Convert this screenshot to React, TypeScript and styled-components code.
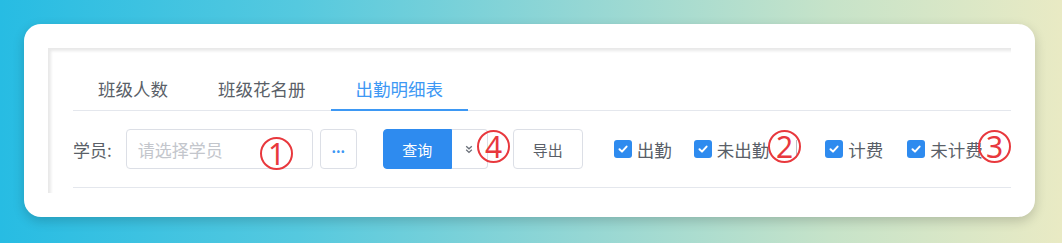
import React from 'react'
import styled, { createGlobalStyle } from 'styled-components'

const GlobalStyle = createGlobalStyle`
    html, body {
        margin: 0;
        height: 100%;
    }
    body {
        padding: 24px;
        box-sizing: border-box;
        background: linear-gradient(90deg, #27bce3 0%, #55c9df 28%, #95d7d4 55%, #c6e3c9 78%, #e9eac4 100%);
        font-family: "Noto Sans CJK SC", "Noto Sans", sans-serif;
    }
`

const Card = styled.div`
    width: 1011px;
    height: 193px;
    box-sizing: border-box;
    padding: 24px;
    background: #fff;
    border-radius: 17px;
    box-shadow: 0 4px 12px rgba(0, 0, 0, 0.18);
`

const Viewport = styled.div`
    height: 145px;
    overflow: hidden;
`

const Panel = styled.div`
    height: 100%;
    box-sizing: border-box;
    padding: 22px 0 0 25px;
    box-shadow: inset 4px 4px 3px -1px rgba(0, 0, 0, 0.09);
`

const TabBar = styled.div`
    display: flex;
    height: 40px;
    border-bottom: 1px solid #e4e7ed;
`

const Tab = styled.div<{ $active?: boolean }>`
    padding: 0 25px;
    box-sizing: border-box;
    line-height: 38px;
    font-size: 17.5px;
    color: ${(p) => (p.$active ? '#3d98f4' : '#5a5f68')};
    border-bottom: 2px solid ${(p) => (p.$active ? '#3d98f4' : 'transparent')};
    margin-bottom: -1px;
    height: 41px;
`

const Toolbar = styled.div`
    position: relative;
    display: flex;
    align-items: center;
    height: 40px;
    margin-top: 18px;
    padding-bottom: 18px;
    border-bottom: 1px solid #e4e7ed;
`

const Label = styled.span`
    font-size: 17px;
    color: #5a5f68;
    margin-right: 14px;
`

const Input = styled.div`
    width: 187px;
    height: 40px;
    box-sizing: border-box;
    border: 1px solid #dcdfe6;
    border-radius: 4px;
    padding-left: 11px;
    display: flex;
    align-items: center;
    font-size: 17px;
    color: #c3c6cc;
`

const Button = styled.div<{ $width: number; $primary?: boolean; $ml?: number }>`
    width: ${(p) => p.$width}px;
    height: 40px;
    box-sizing: border-box;
    margin-left: ${(p) => p.$ml ?? 0}px;
    display: flex;
    align-items: center;
    justify-content: center;
    border: 1px solid ${(p) => (p.$primary ? '#2e8bef' : '#dcdfe6')};
    background: ${(p) => (p.$primary ? '#2e8bef' : '#fff')};
    color: ${(p) => (p.$primary ? '#fff' : '#5a5f68')};
    border-radius: 4px;
    font-size: 15px;
`

const Dots = styled.span`
    color: #3d98f4;
    font-size: 14px;
    font-weight: 700;
    margin-top: -4px;
`

const SplitGroup = styled.div`
    display: flex;
    margin-left: 26px;

    & > div:first-child {
        border-radius: 4px 0 0 4px;
    }
    & > div:last-child {
        border-radius: 0 4px 4px 0;
        border-left: none;
    }
`

const Check = styled.label<{ $ml: number }>`
    display: flex;
    align-items: center;
    gap: 5px;
    margin-left: ${(p) => p.$ml}px;
    font-size: 17.5px;
    color: #5a5f68;
`

const Box = styled.span`
    width: 18px;
    height: 18px;
    border-radius: 3px;
    background: #2e8bef;
    display: flex;
    align-items: center;
    justify-content: center;
`

const Divider = styled.span`
    width: 1px;
    height: 18px;
    background: #b9bdc4;
    margin-left: 27px;
`

const Mark = styled.span<{ $x: number; $y: number }>`
    position: absolute;
    left: ${(p) => p.$x}px;
    top: ${(p) => p.$y}px;
    width: 29px;
    height: 29px;
    border: 2px solid #e8383d;
    border-radius: 50%;
    display: flex;
    align-items: center;
    justify-content: center;
    color: #e8383d;
    font-family: "Noto Sans", sans-serif;
    font-size: 30px;
    line-height: 1;
`

const CheckIcon = () => (
    <svg width="12" height="12" viewBox="0 0 12 12">
        <polyline points="2.5,6.2 5,8.6 9.6,3.6" fill="none" stroke="#fff" strokeWidth="2" strokeLinecap="round" strokeLinejoin="round" />
    </svg>
)

const DoubleDown = () => (
    <svg width="8" height="9" viewBox="0 0 8 9">
        <polyline points="1.2,1.2 4,3.8 6.8,1.2" fill="none" stroke="#6b7079" strokeWidth="1.3" />
        <polyline points="1.2,4.8 4,7.4 6.8,4.8" fill="none" stroke="#6b7079" strokeWidth="1.3" />
    </svg>
)

const tabs = ['班级人数', '班级花名册', '出勤明细表']

const CheckItem = ({ text, ml }: { text: string; ml: number }) => (
    <Check $ml={ml}>
        <Box>
            <CheckIcon />
        </Box>
        {text}
    </Check>
)

const App = () => {
    return (
        <>
            <GlobalStyle />
            <Card>
                <Viewport>
                    <Panel>
                        <TabBar>
                            {tabs.map((t, i) => (
                                <Tab key={t} $active={i === 2}>
                                    {t}
                                </Tab>
                            ))}
                        </TabBar>
                        <Toolbar>
                            <Label>学员:</Label>
                            <Input>请选择学员</Input>
                            <Button $width={37} $ml={7}>
                                <Dots>...</Dots>
                            </Button>
                            <SplitGroup>
                                <Button $width={69} $primary>
                                    查询
                                </Button>
                                <Button $width={36}>
                                    <DoubleDown />
                                </Button>
                            </SplitGroup>
                            <Button $width={70} $ml={25}>
                                导出
                            </Button>
                            <CheckItem text="出勤" ml={31} />
                            <CheckItem text="未出勤" ml={22} />
                            <Divider />
                            <CheckItem text="计费" ml={28} />
                            <CheckItem text="未计费" ml={24} />
                            <Mark $x={187} $y={8}>1</Mark>
                            <Mark $x={695} $y={1}>2</Mark>
                            <Mark $x={905} $y={1}>3</Mark>
                            <Mark $x={404} $y={1}>4</Mark>
                        </Toolbar>
                    </Panel>
                </Viewport>
            </Card>
        </>
    )
}

export default App
